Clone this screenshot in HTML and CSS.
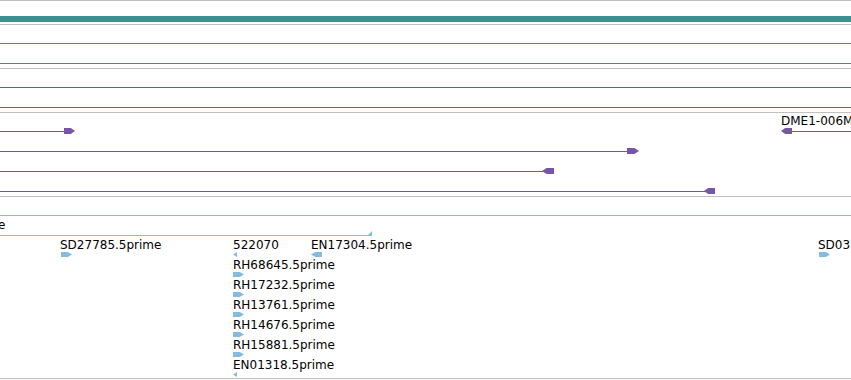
FILE: index.html
```html
<!DOCTYPE html>
<html lang="en">
<head>
    <meta charset="UTF-8">
    <title>Track view</title>
    <link rel="stylesheet" href="styles.css">
</head>
<body>
    <div class="tracks">
        <!-- sequence overview -->
        <div class="track">
            <div class="row">
                <div class="bar bar-teal" style="left: 0; width: 851px;"></div>
            </div>
        </div>

        <div class="track">
            <div class="row"><div class="line line-teal" style="left: 0; width: 851px;"></div></div>
            <div class="row"><div class="line line-teal" style="left: 0; width: 851px;"></div></div>
        </div>

        <div class="track">
            <div class="row"><div class="line line-blue" style="left: 0; width: 851px;"></div></div>
            <div class="row"><div class="line line-blue" style="left: 0; width: 851px;"></div></div>
        </div>

        <!-- transcripts -->
        <div class="track">
            <div class="row">
                <div class="line line-purple" style="left: 0; width: 68px;"></div>
                <div class="glyph arrow-r glyph-purple" style="left: 64px; width: 11px;"></div>
                <span class="label" style="left: 781px;">DME1-006M</span>
                <div class="line line-purple" style="left: 788px; width: 63px;"></div>
                <div class="glyph arrow-l glyph-purple" style="left: 781px; width: 11px;"></div>
            </div>
            <div class="row">
                <div class="line line-purple" style="left: 0; width: 630px;"></div>
                <div class="glyph arrow-r glyph-purple" style="left: 627px; width: 12px;"></div>
            </div>
            <div class="row">
                <div class="line line-purple" style="left: 0; width: 548px;"></div>
                <div class="glyph arrow-l glyph-purple" style="left: 542px; width: 12px;"></div>
            </div>
            <div class="row">
                <div class="line line-purple" style="left: 0; width: 708px;"></div>
                <div class="glyph arrow-l glyph-purple" style="left: 704px; width: 11px;"></div>
            </div>
        </div>

        <!-- ESTs -->
        <div class="track track-last">
            <div class="row"><div class="line line-sky" style="left: 0; width: 851px;"></div></div>
            <div class="row">
                <span class="label" style="left: -2px;">e</span>
                <div class="line line-sky" style="left: 0; width: 371px;"></div>
                <div class="tick" style="left: 367px;"></div>
            </div>
            <div class="row">
                <span class="label" style="left: 60px;">SD27785.5prime</span>
                <div class="glyph arrow-r glyph-sky" style="left: 61px; width: 11px;"></div>
                <span class="label" style="left: 233px;">522070</span>
                <div class="glyph point-l glyph-sky" style="left: 233px; width: 4px;"></div>
                <span class="label" style="left: 311px;">EN17304.5prime</span>
                <div class="glyph arrow-l glyph-sky" style="left: 311px; width: 11px;"></div>
                <span class="label" style="left: 818px;">SD03</span>
                <div class="glyph arrow-r glyph-sky" style="left: 819px; width: 11px;"></div>
            </div>
            <div class="row">
                <span class="label" style="left: 233px;">RH68645.5prime</span>
                <div class="glyph arrow-r glyph-sky" style="left: 233px; width: 11px;"></div>
            </div>
            <div class="row">
                <span class="label" style="left: 233px;">RH17232.5prime</span>
                <div class="glyph arrow-r glyph-sky" style="left: 233px; width: 11px;"></div>
            </div>
            <div class="row">
                <span class="label" style="left: 233px;">RH13761.5prime</span>
                <div class="glyph arrow-r glyph-sky" style="left: 233px; width: 11px;"></div>
            </div>
            <div class="row">
                <span class="label" style="left: 233px;">RH14676.5prime</span>
                <div class="glyph arrow-r glyph-sky" style="left: 233px; width: 11px;"></div>
            </div>
            <div class="row">
                <span class="label" style="left: 233px;">RH15881.5prime</span>
                <div class="glyph arrow-r glyph-sky" style="left: 233px; width: 11px;"></div>
            </div>
            <div class="row">
                <span class="label" style="left: 233px;">EN01318.5prime</span>
                <div class="glyph point-l glyph-sky" style="left: 233px; width: 4px;"></div>
            </div>
        </div>
    </div>
</body>
</html>
```

FILE: styles.css
```css
body {
    margin: 0;
    background: #fff;
    font-family: "DejaVu Sans", sans-serif;
    font-size: 12px;
    color: #000;
}

.tracks {
    width: 851px;
    height: 380px;
    overflow: hidden;
    border-top: 1px solid #c0c0c0;
    box-sizing: border-box;
}

.track {
    padding-bottom: 3px;
    border-bottom: 1px solid #c0c0c0;
}

.track-last {
    padding-bottom: 1px;
}

.row {
    position: relative;
    height: 20px;
}

.bar {
    position: absolute;
    top: 15px;
    height: 6px;
}

.bar-teal {
    background: #408f90;
}

.line {
    position: absolute;
    top: 18px;
    height: 1px;
}

.line-teal {
    background: #2b90ad;
}

.line-blue {
    background: #3c6cc2;
}

.line-purple {
    background: #6c5a9c;
}

.line-sky {
    background: #8cb9d9;
}

.glyph {
    position: absolute;
    top: 15px;
    height: 6px;
}

.glyph-purple {
    background: #7655aa;
}

.glyph-sky {
    top: 15px;
    height: 5px;
    background: #86bbe0;
}

.arrow-r {
    clip-path: polygon(0 0, 62% 0, 100% 50%, 62% 100%, 0 100%);
}

.arrow-l {
    clip-path: polygon(38% 0, 100% 0, 100% 100%, 38% 100%, 0 50%);
}

.point-l {
    clip-path: polygon(100% 0, 100% 100%, 0 50%);
}

.tick {
    position: absolute;
    top: 14px;
    width: 5px;
    height: 5px;
    background: #86bbe0;
    clip-path: polygon(100% 0, 100% 100%, 0 100%);
}

.label {
    position: absolute;
    top: 1px;
    line-height: 14px;
    white-space: nowrap;
}
```
